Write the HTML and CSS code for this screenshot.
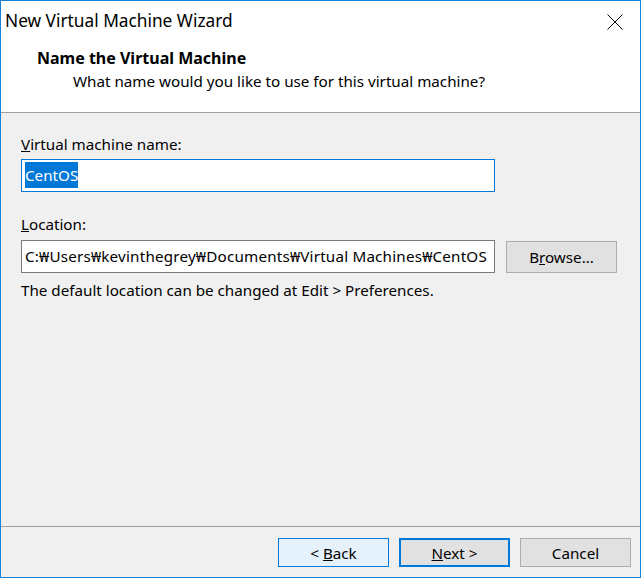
FILE: index.html
```html
<html>
    <head>
        <meta charset="UTF-8" />
        <link rel="stylesheet" href="styles.css">
    </head>
    <body>
        <div class="window">
            <div class="titlebar">
                <span class="title">New Virtual Machine Wizard</span>
                <span class="close">
                    <svg width="16" height="16" viewBox="0 0 16 16">
                        <path d="M0.5 0.5 L15.5 15.5 M15.5 0.5 L0.5 15.5" stroke="#000" stroke-width="1" fill="none" />
                    </svg>
                </span>
            </div>
            <div class="header">
                <div class="heading">Name the Virtual Machine</div>
                <div class="subheading">What name would you like to use for this virtual machine?</div>
            </div>
            <div class="content">
                <div class="label"><u>V</u>irtual machine name:</div>
                <div class="field focused"><span class="selected">CentOS</span></div>
                <div class="label second"><u>L</u>ocation:</div>
                <div class="row">
                    <div class="field path">C:₩Users₩kevinthegrey₩Documents₩Virtual Machines₩CentOS</div>
                    <div class="button browse"><span>B<u>r</u>owse...</span></div>
                </div>
                <div class="note">The default location can be changed at Edit &gt; Preferences.</div>
            </div>
            <div class="footer">
                <div class="button hover"><span>&lt; <u>B</u>ack</span></div>
                <div class="button default"><span><u>N</u>ext &gt;</span></div>
                <div class="button"><span>Cancel</span></div>
            </div>
        </div>
    </body>
</html>
```

FILE: styles.css
```css
body {
    margin: 0;
    font-family: "Noto Sans", sans-serif;
    font-size: 15.2px;
    color: #000;
}
* {
    box-sizing: border-box;
}
.window {
    width: 641px;
    height: 578px;
    border: 1px solid #1883d7;
    display: flex;
    flex-direction: column;
    background: #f0f0f0;
}

.titlebar {
    height: 39px;
    background: #fff;
    display: flex;
    align-items: center;
    justify-content: space-between;
    padding-left: 4px;
    padding-right: 17px;
}
.title {
    font-size: 17.3px;
}
.close {
    display: flex;
    padding-top: 2px;
}

.header {
    height: 73px;
    background: #fff;
    border-bottom: 1px solid #a0a0a0;
    padding-top: 6px;
}
.heading {
    font-weight: bold;
    font-size: 16px;
    padding-left: 36px;
    line-height: 24px;
}
.subheading {
    padding-left: 72px;
    line-height: 22px;
}

.content {
    flex: 1;
    padding: 20px 20px 0 20px;
}
.label {
    line-height: 22px;
    margin-bottom: 4px;
}
.label.second {
    margin-top: 21px;
    margin-bottom: 5px;
}
.field {
    width: 474px;
    height: 33px;
    background: #fff;
    border: 1px solid #7a7a7a;
    padding: 0 3px;
    line-height: 31px;
    white-space: nowrap;
    overflow: hidden;
}
.field.focused {
    border-color: #0078d7;
}
.field.path {
    letter-spacing: 0.2px;
}
.selected {
    background: #0078d7;
    color: #fff;
    padding: 3px 0;
}
.row {
    display: flex;
    align-items: center;
    gap: 11px;
}
.note {
    margin-top: 6px;
    line-height: 22px;
}

.button {
    width: 111px;
    height: 29px;
    background: #e1e1e1;
    border: 1px solid #adadad;
    display: flex;
    align-items: center;
    justify-content: center;
}
.button.browse {
    height: 32px;
}
.button.hover {
    background: #e5f1fb;
    border-color: #0078d7;
}
.button.default {
    border: 2px solid #0078d7;
}

.footer {
    height: 51px;
    border-top: 1px solid #a0a0a0;
    display: flex;
    justify-content: flex-end;
    gap: 10px;
    padding: 11px 9px 0 0;
}
```
